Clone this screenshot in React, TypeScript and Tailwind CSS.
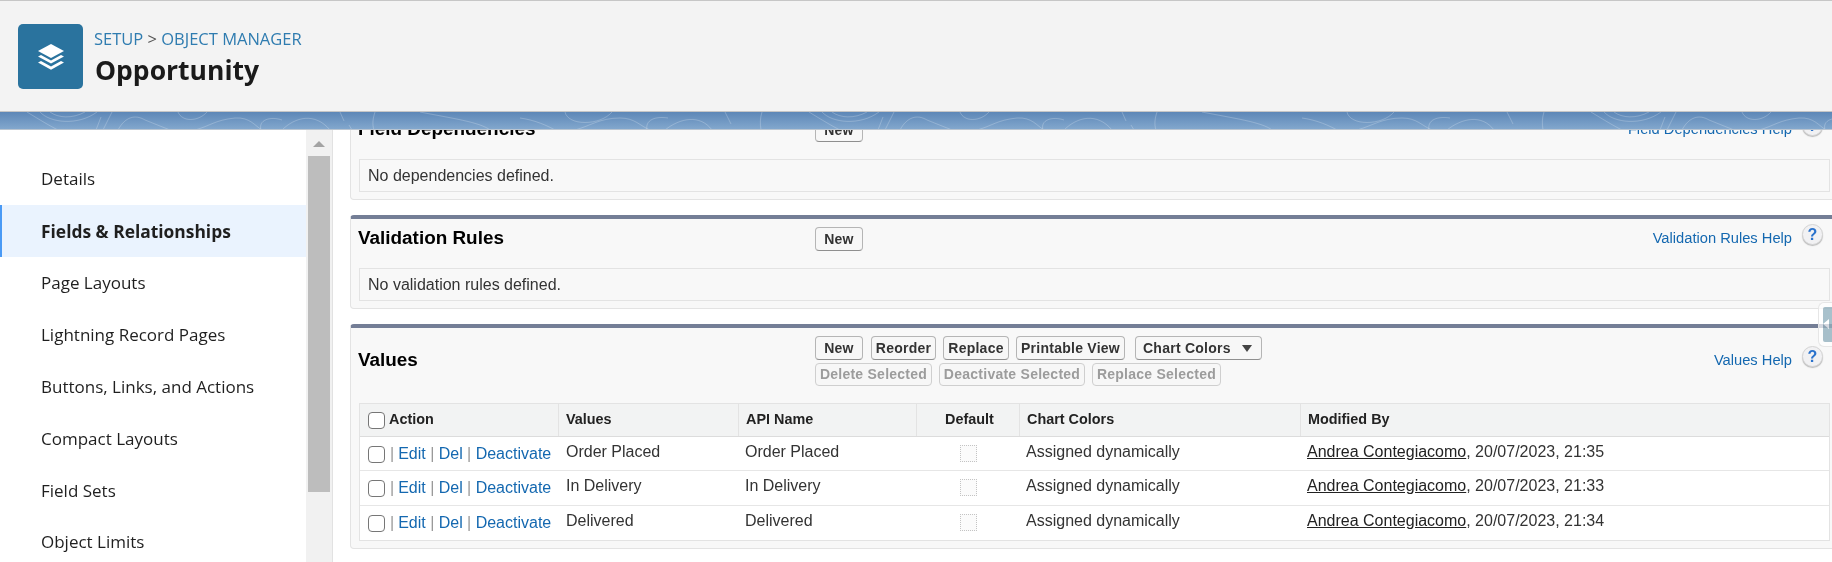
const arial = "font-['Liberation_Sans',Arial,sans-serif]";

const navItems = [
  "Details",
  "Fields & Relationships",
  "Page Layouts",
  "Lightning Record Pages",
  "Buttons, Links, and Actions",
  "Compact Layouts",
  "Field Sets",
  "Object Limits",
];

const rows = [
  { value: "Order Placed", time: "20/07/2023, 21:35" },
  { value: "In Delivery", time: "20/07/2023, 21:33" },
  { value: "Delivered", time: "20/07/2023, 21:34" },
];

const tableCols = "grid grid-cols-[199px_180px_178px_103px_281px_1fr]";

function LayersIcon() {
  return (
    <svg width="28" height="28" viewBox="0 0 28 28" fill="#fff">
      <path d="M14 1 L27 8 L14 15 L1 8 Z" />
      <path d="M4 12 L14 17.4 L24 12 L27 13.6 L14 20.6 L1 13.6 Z" />
      <path d="M4 18 L14 23.4 L24 18 L27 19.6 L14 26.8 L1 19.6 Z" />
    </svg>
  );
}

function BandPattern() {
  return (
    <svg className="absolute inset-0 h-full w-full" fill="none">
      <defs>
        <pattern id="contours" width="782" height="18" patternUnits="userSpaceOnUse">
          <g stroke="#fff" strokeOpacity="0.22" strokeWidth="1" fill="none">
            <path d="M27 0 C40 8 50 14 58 18" />
            <path d="M40 0 C50 11 78 14 97 0" />
            <path d="M50 0 C58 6 72 7 85 0" />
            <path d="M112 0 L103 18" />
            <path d="M101 5 L96 18" />
            <path d="M118 18 C125 5 135 2 145 8 C155 12 165 16 170 18" />
            <path d="M178 0 C182 10 198 10 207 0" />
            <path d="M195 18 C210 14 215 8 235 6 C250 5 255 14 262 18" />
            <path d="M261 18 C258 8 270 4 282 8" />
            <path d="M282 18 C295 5 315 0 330 18" />
            <path d="M340 0 L344 9" />
            <path d="M349 13 L352 18" />
            <path d="M375 0 C373 6 372 12 374 18" />
            <path d="M420 0 C450 6 480 10 490 18" />
            <path d="M520 6 C535 8 548 14 555 18" />
            <path d="M565 0 C568 14 600 14 612 0" />
            <path d="M575 18 C590 14 600 6 620 6 C635 6 640 14 650 18" />
            <path d="M647 18 C645 8 655 4 668 6" />
            <path d="M665 18 C680 6 700 2 712 18" />
            <path d="M725 0 L731 12" />
            <path d="M762 0 C760 6 760 12 761 18" />
          </g>
        </pattern>
      </defs>
      <rect width="100%" height="100%" fill="url(#contours)" />
    </svg>
  );
}

function Btn({ label, disabled, className }: { label: string; disabled?: boolean; className?: string }) {
  return (
    <button
      className={`flex h-full items-center justify-center rounded-[4px] border bg-[#f7f7f7] text-[14px] font-bold tracking-[0.25px] ${
        disabled ? "border-[#cfcfcf] text-[#9c9c9c]" : "border-[#b5b5b5] border-b-[#8f8f8f] text-[#333]"
      } ${className}`}
    >
      {label}
    </button>
  );
}

function HelpLink({ label, className }: { label: string; className?: string }) {
  return (
    <div className={`ml-auto mr-[7px] flex items-start ${className}`}>
      <a className="mt-[4px] text-[14.7px] leading-[20px] text-[#1468b0]">{label}</a>
      <span className="ml-[10px] flex h-[21px] w-[21px] items-center justify-center rounded-full border border-[#d5d5d5] bg-[#f1f1f3] text-[16px] font-bold leading-none text-[#2a72cc] shadow-[0_1px_1px_#bbb]">
        ?
      </span>
    </div>
  );
}

function Panel({
  title,
  help,
  message,
  className,
}: {
  title: string;
  help: string;
  message: string;
  className?: string;
}) {
  return (
    <section className={`mr-[-8px] h-[94px] rounded-[4px] border border-t-4 border-[#e3e3e3] border-t-[#747e96] bg-[#f8f8f8] pl-[7px] pr-[9px] ${className}`}>
      <div className="flex h-[49px] items-start pt-[8px]">
        <h3 className="w-[457px] text-[18.9px] font-bold leading-[22px] text-black">{title}</h3>
        <div className="h-[24px]">
          <Btn label="New" className="w-[48px]" />
        </div>
        <HelpLink label={help} className="mt-[-3px]" />
      </div>
      <div className="ml-[1px] flex h-[33px] items-center border border-[#e3e3e3] pl-[8px] text-[16px] text-[#333]">
        {message}
      </div>
    </section>
  );
}

function Check({ className }: { className?: string }) {
  return (
    <span className={`block h-[17px] w-[17px] shrink-0 rounded-[4px] border-[1.5px] border-[#767676] bg-white ${className}`} />
  );
}

function ValuesPanel() {
  const topRow = [
    { label: "New", w: "w-[48px]" },
    { label: "Reorder", w: "w-[65px] ml-[8px]" },
    { label: "Replace", w: "w-[66px] ml-[7px]" },
    { label: "Printable View", w: "w-[109px] ml-[7px]" },
  ];
  const bottomRow = [
    { label: "Delete Selected", w: "w-[117px]" },
    { label: "Deactivate Selected", w: "w-[146px] ml-[7px]" },
    { label: "Replace Selected", w: "w-[129px] ml-[7px]" },
  ];
  return (
    <section className="mr-[-8px] mt-[15px] h-[225px] rounded-[4px] border border-t-4 border-[#e3e3e3] border-t-[#747e96] bg-[#f8f8f8] pl-[7px] pr-[9px]">
      <div className="flex h-[75px] items-start pt-[8px]">
        <h3 className="w-[457px] pt-[13px] text-[18.9px] font-bold leading-[22px] text-black">Values</h3>
        <div className="flex flex-col gap-[3px]">
          <div className="flex h-[24px]">
            {topRow.map((b) => (
              <Btn key={b.label} label={b.label} className={b.w} />
            ))}
            <button className="ml-[10px] flex h-full w-[127px] items-center justify-between rounded-[4px] border border-[#b5b5b5] border-b-[#8f8f8f] bg-[#f7f7f7] pl-[7px] pr-[9px] text-[14px] font-bold tracking-[0.25px] text-[#333]">
              Chart Colors
              <span className="h-0 w-0 border-x-[5px] border-t-[7px] border-x-transparent border-t-[#444]" />
            </button>
          </div>
          <div className="flex h-[23px]">
            {bottomRow.map((b) => (
              <Btn key={b.label} label={b.label} disabled className={b.w} />
            ))}
          </div>
        </div>
        <HelpLink label="Values Help" className="mt-[10px]" />
      </div>
      <div className="ml-[1px] border border-[#e3e3e3] bg-white">
        <div className={`${tableCols} h-[33px] border-b border-[#dcdcdc] bg-[#f2f3f3] text-[14.4px] font-bold text-[#222]`}>
          <div className="flex items-center border-r border-[#e3e3e3] pl-[8px]">
            <Check />
            <span className="ml-[4px]">Action</span>
          </div>
          <div className="flex items-center border-r border-[#e3e3e3] pl-[7px]">Values</div>
          <div className="flex items-center border-r border-[#e3e3e3] pl-[7px]">API Name</div>
          <div className="flex items-center justify-center border-r border-[#e3e3e3] pl-[3px]">Default</div>
          <div className="flex items-center border-r border-[#e3e3e3] pl-[7px]">Chart Colors</div>
          <div className="flex items-center pl-[7px]">Modified By</div>
        </div>
        {rows.map((r, i) => (
          <div key={r.value} className={`${tableCols} h-[34.3px] text-[16px] text-[#333] ${i < 2 ? "border-b border-[#e6e6e6]" : ""}`}>
            <div className="flex items-center whitespace-nowrap pl-[8px] pt-[1px]">
              <Check />
              <span className="ml-[5px] text-[#999]">|</span>
              <a className="ml-[4px] text-[#1468b0]">Edit</a>
              <span className="mx-[4.4px] text-[#999]">|</span>
              <a className="text-[#1468b0]">Del</a>
              <span className="mx-[4.4px] text-[#999]">|</span>
              <a className="text-[#1468b0]">Deactivate</a>
            </div>
            <div className="flex items-center pb-[3px] pl-[7px]">{r.value}</div>
            <div className="flex items-center pb-[3px] pl-[6px]">{r.value}</div>
            <div className="flex items-center justify-center pr-[1px]">
              <span className="block h-[17px] w-[17px] border border-dotted border-[#c4c4c4] bg-[#fbfbfb]" />
            </div>
            <div className="flex items-center pb-[3px] pl-[6px]">Assigned dynamically</div>
            <div className="flex items-center pb-[3px] pl-[6px]">
              <a className="text-[#222] underline">Andrea Contegiacomo</a>, {r.time}
            </div>
          </div>
        ))}
      </div>
    </section>
  );
}

export default function App() {
  return (
    <div className={`relative flex h-[562px] flex-col overflow-hidden bg-white ${arial}`}>
      <header className="flex h-[112px] shrink-0 items-start border-y border-y-[#c6c6c6] bg-[#f3f3f3] pl-[18px] pt-[23px]">
        <div className="flex h-[65px] w-[65px] items-center justify-center rounded-[5px] bg-[#2a739e]">
          <LayersIcon />
        </div>
        <div className="ml-[11px] font-['Open_Sans',sans-serif]">
          <div className="mt-[4px] text-[16.5px] leading-[22px] text-[#2f7cb0]">
            SETUP <span className="text-[#555]">&gt;</span> OBJECT MANAGER
          </div>
          <div className="ml-[1px] mt-[3px] text-[26.5px] font-bold leading-[34px] text-[#1a1a1a]">Opportunity</div>
        </div>
      </header>

      <div className="relative h-[18px] shrink-0 border-b border-[#b9c4d0] bg-gradient-to-b from-[#5d87b7] to-[#82a7cd]">
        <BandPattern />
      </div>

      <div className="flex min-h-0 flex-1">
        <nav className="relative flex w-[333px] shrink-0 border-r border-[#e2e2e2] font-['Open_Sans',sans-serif]">
          <ul className="w-[306px] pt-[23px] text-[17px] text-[#1f1f1f]">
            {navItems.map((item, i) => (
              <li
                key={item}
                className={`flex h-[51.9px] items-center ${
                  i === 1
                    ? "border-l-2 border-[#4a9af5] bg-[#eaf3fe] pl-[39px] text-[17.4px] font-bold"
                    : "pl-[41px]"
                }`}
              >
                {item}
              </li>
            ))}
          </ul>
          <div className="flex w-[26px] flex-col items-center bg-[#f1f1f1] pr-[1px]">
            <span className="mt-[11px] h-0 w-0 border-x-[6px] border-b-[6px] border-x-transparent border-b-[#a3a3a3]" />
            <span className="mt-[9px] h-[336px] w-[22px] bg-[#bdbdbd]" />
          </div>
        </nav>

        <main className="min-w-0 flex-1 overflow-hidden pl-[17px]">
          <div className="mt-[-24px]">
            <Panel
              title="Field Dependencies"
              help="Field Dependencies Help"
              message="No dependencies defined."
            />
            <Panel
              title="Validation Rules"
              help="Validation Rules Help"
              message="No validation rules defined."
              className="mt-[15px]"
            />
            <ValuesPanel />
          </div>
        </main>
      </div>

      <div className="absolute right-0 top-[302px] h-[45px] w-[14px] rounded-l-[6px] border border-r-0 border-[#e6e6e6] bg-white/70 pl-[4px] pt-[4px]">
        <div className="relative h-[35px] w-full rounded-l-[2px] bg-[#a8c1cc] mix-blend-multiply">
          <span className="absolute left-0 top-[12px] h-0 w-0 border-y-[5px] border-r-[6px] border-y-transparent border-r-white" />
        </div>
      </div>
    </div>
  );
}
